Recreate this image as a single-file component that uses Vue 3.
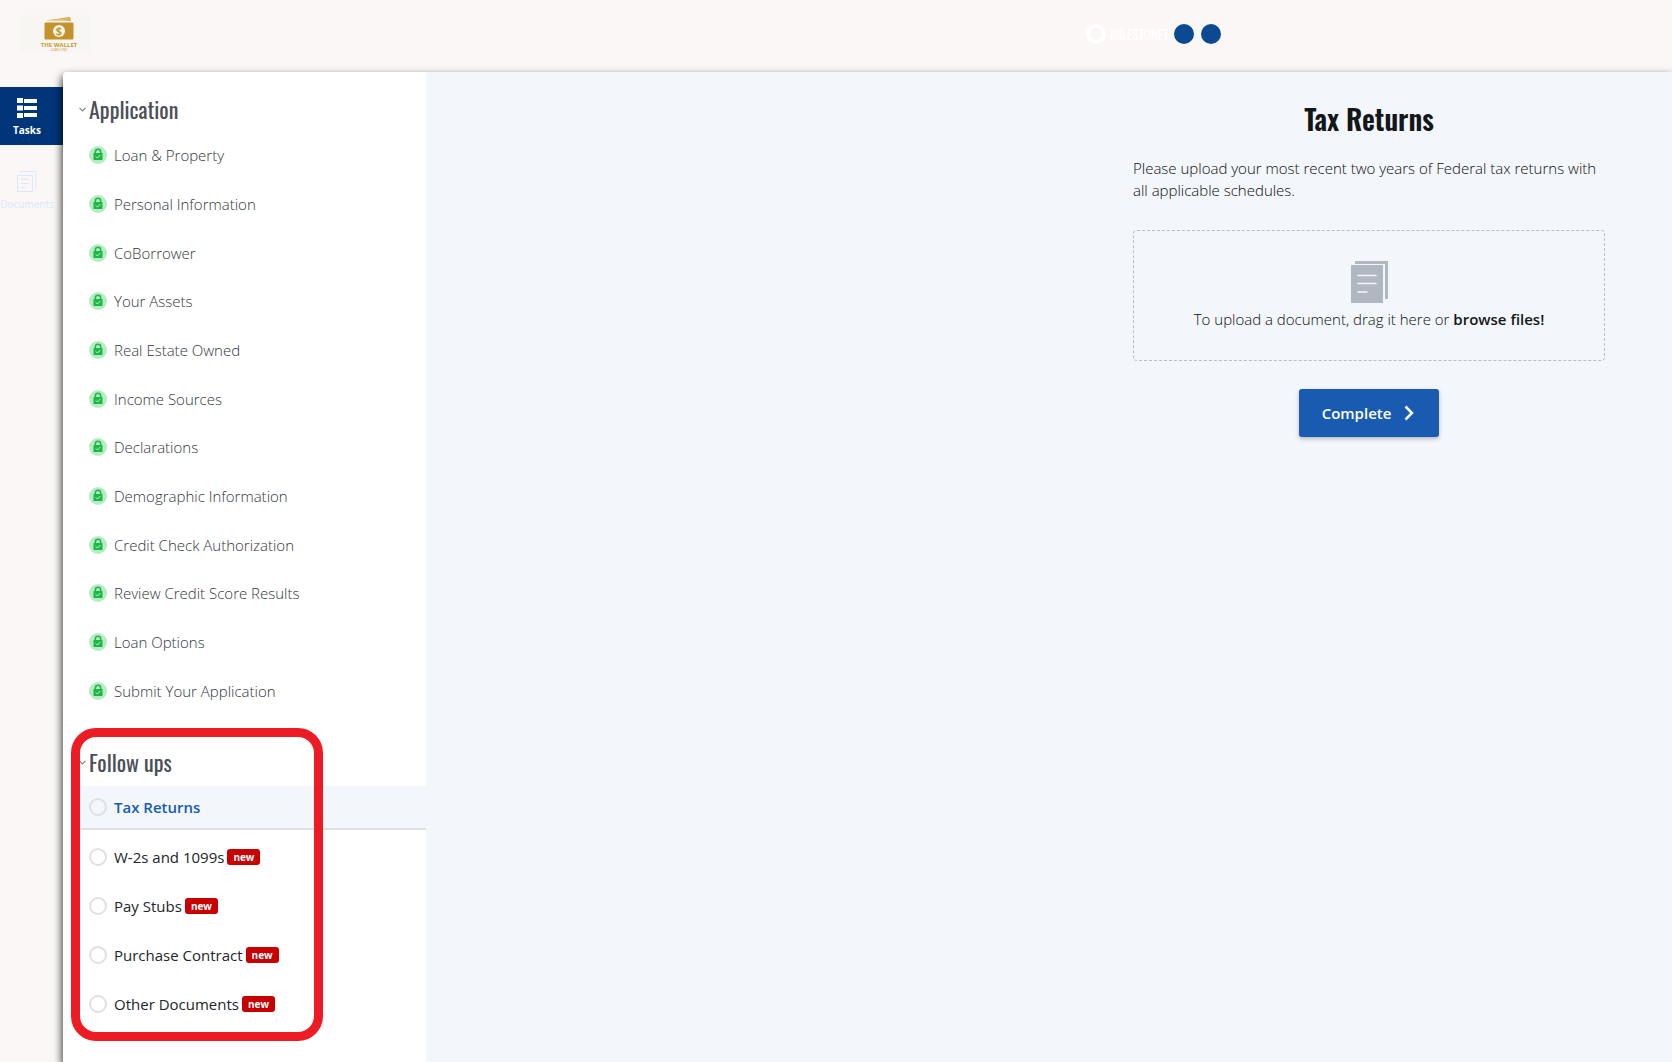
<template>
  <div class="page">
    <header class="topbar">
      <a class="brand" href="#" aria-label="The Wallet">
        <svg class="logo" viewBox="0 0 70 38">
          <path d="M26 5.5 50 2l.8 2.6V6z" fill="#c9982f" />
          <path d="M29 5.5 50.5 3.6M31 6.2 50.6 5" stroke="#f5e6c4" stroke-width=".6" />
          <rect x="24.500" y="7.500" width="29" height="17" rx="1" fill="#c4932c" />
          <circle cx="39" cy="16" r="6" fill="#fbf6ea" />
          <text class="coin" x="39" y="20">$</text>
          <text class="logo-name" x="39" y="32">THE WALLET</text>
          <text class="logo-sub" x="39" y="36">LOAN FUND</text>
        </svg>
      </a>
      <div class="milestones">
        <span class="ring"></span>
        <span class="milestone">MILESTONE1</span>
        <span class="dot"></span>
        <span class="dot"></span>
      </div>
    </header>

    <div class="body">
      <nav class="rail">
        <a class="rail-item on" href="#">
          <svg width="20" height="20" viewBox="0 0 20 20" fill="#fff">
            <path d="M0 0h6v5H0zM7 1h13v4H7zM0 7.500h6v5H0zM7 8h13v4H7zM0 15h6v5H0zM7 15h13v4H7z" />
          </svg>
          <span>Tasks</span>
        </a>
        <a class="rail-item" href="#">
          <svg width="20" height="21" viewBox="0 0 20 21" fill="none" stroke="currentColor">
            <path d="M.5 4.500h15v16H.5zM3 .5h16v17.500M4 8.500h8M4 12.500h8M4 16.500h4" />
          </svg>
          <span>Documents</span>
        </a>
      </nav>

      <div class="panel">
        <aside class="sidebar">
          <section v-for="g in groups" :key="g.title" :class="{ marked: g.marked }">
            <h2>
              <button class="toggle" @click="g.open = !g.open">
                <svg width="7" height="5" viewBox="0 0 7 5" fill="none" stroke="#7d838c" stroke-width="1.200">
                  <path d="M.5.8 3.500 3.800 6.500.8" />
                </svg>
                {{ g.title }}
              </button>
            </h2>
            <ul v-show="g.open" :class="g.marked ? 'short' : 'long'">
              <li v-for="t in g.tasks" :key="t.name">
                <a class="task" :class="{ done: t.done, active: t.name === current }" href="#" @click.prevent="current = t.name">
                  <svg v-if="t.done" width="18" height="18" viewBox="0 0 18 18">
                    <circle cx="9" cy="9" r="9" fill="#b5ecc3" />
                    <path d="M6.300 8V6a2.700 2.700 0 0 1 5.400 0v2" fill="none" stroke="#1db843" stroke-width="1.500" />
                    <rect x="4.500" y="7" width="9" height="7" rx=".6" fill="#1db843" />
                    <path d="m6.800 10.400 1.600 1.600 2.900-3" fill="none" stroke="#c5f2d0" />
                  </svg>
                  <span v-else class="open"></span>
                  <span class="name">{{ t.name }}</span>
                  <span v-if="t.fresh" class="badge">new</span>
                </a>
              </li>
            </ul>
          </section>
        </aside>

        <main class="content">
          <div class="upload">
            <h1>Tax Returns</h1>
            <p>Please upload your most recent two years of Federal tax returns with all applicable schedules.</p>
            <label class="drop">
              <svg width="38" height="42" viewBox="0 0 38 42">
                <path d="M5 0h33v38h-3V3H5z" fill="#b0b7c0" />
                <rect x="1" y="4" width="32" height="38" rx=".5" fill="#b0b7c0" />
                <path d="M8 14.500h18M8 22.500h18M8 31h9" stroke="#f3f6fb" stroke-width="1.500" stroke-linecap="round" />
              </svg>
              <span>To upload a document, drag it here or <b>browse files!</b></span>
              <input type="file" multiple />
            </label>
            <button class="complete">
              Complete
              <svg width="10" height="16" viewBox="0 0 10 16" fill="none" stroke="#fff" stroke-width="2.500">
                <path d="m1.500 1.500 6.500 6.500-6.500 6.500" />
              </svg>
            </button>
          </div>
        </main>
      </div>
    </div>
  </div>
</template>

<script setup>
import { reactive, ref } from "vue";

const current = ref("Tax Returns");

const applicationTasks = [
  "Loan & Property",
  "Personal Information",
  "CoBorrower",
  "Your Assets",
  "Real Estate Owned",
  "Income Sources",
  "Declarations",
  "Demographic Information",
  "Credit Check Authorization",
  "Review Credit Score Results",
  "Loan Options",
  "Submit Your Application",
];

const groups = reactive([
  {
    title: "Application",
    open: true,
    marked: false,
    tasks: applicationTasks.map(name => ({ name, done: true })),
  },
  {
    title: "Follow ups",
    open: true,
    marked: true,
    tasks: [
      { name: "Tax Returns" },
      { name: "W-2s and 1099s", fresh: true },
      { name: "Pay Stubs", fresh: true },
      { name: "Purchase Contract", fresh: true },
      { name: "Other Documents", fresh: true },
    ],
  },
]);
</script>

<style>
body { background:#faf7f6; }
</style>

<style scoped>
.page { height:100vh; display:flex; flex-direction:column; overflow:hidden; font-family:"Open Sans", "Noto Sans", sans-serif; font-size:15px; color:#0c0e10; background:#faf7f6; }
a { text-decoration:none; color:inherit; }
button { font:inherit; border:0; cursor:pointer; }
h1, h2, p, ul { margin:0; padding:0; }
ul { list-style:none; }

.topbar { display:flex; flex:none; justify-content:space-between; height:72px; padding:0 451px 0 20px; }
.brand { padding-top:15px; }
.logo { display:block; width:70px; height:38px; background:#f7f6f3; }
.logo text { text-anchor:middle; font-family:"Open Sans", sans-serif; font-weight:700; fill:#c9982f; }
.logo .coin { font-size:11px; }
.logo .logo-name { font-size:6px; }
.logo .logo-sub { font-size:3px; font-weight:400; }

.milestones { display:flex; align-items:center; height:68px; color:#fff; }
.ring { box-sizing:border-box; width:20px; height:20px; border:4px solid #fff; border-radius:50%; }
.milestone { width:68px; padding-left:4px; box-sizing:border-box; font-family:Oswald, "Liberation Sans Narrow", sans-serif; font-size:13px; }
.dot { width:20px; height:20px; border-radius:50%; background:#0b4a92; }
.dot + .dot { margin-left:7px; }

.body { display:flex; flex:1; min-height:0; }
.rail { width:63px; flex:none; padding-top:15px; }
.rail-item { display:flex; flex-direction:column; align-items:center; box-sizing:border-box; height:58px; padding:11px 9px 0 0; margin-bottom:15px; color:#d9e8fa; font-size:10px; line-height:14px; gap:5px; }
.rail-item.on { background:#01357a; color:#fff; font-weight:700; }

.panel { display:flex; flex:1; min-width:0; border-radius:4px 0 0 0; box-shadow:-1px 4px 8px rgba(0,0,0,.8); background:#f3f6fb; }
.sidebar { width:363px; flex:none; box-sizing:border-box; padding-top:15px; background:#fff; border-radius:4px 0 0 0; }
section { position:relative; margin-bottom:25px; }
h2 { height:44px; padding-left:16px; font-weight:400; }
.toggle { display:flex; align-items:center; gap:3px; height:44px; padding:0; background:none; font-family:Oswald, "Liberation Sans Narrow", sans-serif; font-size:22px; line-height:42px; color:#4a4f57; }

/* red frame round the follow up tasks */
.marked::after { content:""; position:absolute; top:-12px; bottom:-13px; left:8px; width:252px; box-sizing:border-box; border:9px solid #ed1c24; border-radius:25px; pointer-events:none; }

ul { display:grid; grid-auto-rows:1fr; align-items:center; padding-left:16px; }
.long { min-height:584px; }
.short { min-height:244px; }
.task { display:flex; align-items:center; height:44px; padding-left:10px; color:#212529; }
.task svg, .open { flex:none; margin-right:7px; }
.open { box-sizing:border-box; width:18px; height:18px; border:2px solid #dde1e6; border-radius:50%; }
.done { color:#31363e; font-weight:300; }
.active { box-sizing:border-box; border-bottom:2px solid #dcdfe3; background:#f3f6fb; color:#185bb0; font-weight:600; }
.badge { margin-left:3px; padding:0 6px; border-radius:3px; background:#c80000; color:#fff; font-size:10px; font-weight:700; line-height:16px; }

.content { display:flex; flex:1; justify-content:flex-end; align-items:flex-start; min-width:0; padding:26px 67px 0 24px; }
.upload { display:flex; flex-direction:column; align-items:center; flex:0 1 472px; font-weight:300; }
h1 { font-family:Oswald, "Liberation Sans Narrow", sans-serif; font-size:28px; font-weight:600; line-height:42px; color:#14171a; }
p { margin-top:17px; line-height:22px; }
.drop { display:flex; flex-direction:column; align-items:center; box-sizing:border-box; width:100%; margin-top:29px; padding:30px 0; border:1px dashed #b9bfc6; border-radius:4px; line-height:22px; gap:5px; cursor:pointer; }
.drop b { color:#14171a; font-weight:600; }
.drop input { display:none; }
.complete { display:flex; align-items:center; gap:13px; margin-top:28px; padding:0 25px 0 23px; height:48px; border-radius:3px; background:#185bb0; color:#fff; font-weight:600; box-shadow:0 2px 4px rgba(0,0,0,.25); }
</style>
